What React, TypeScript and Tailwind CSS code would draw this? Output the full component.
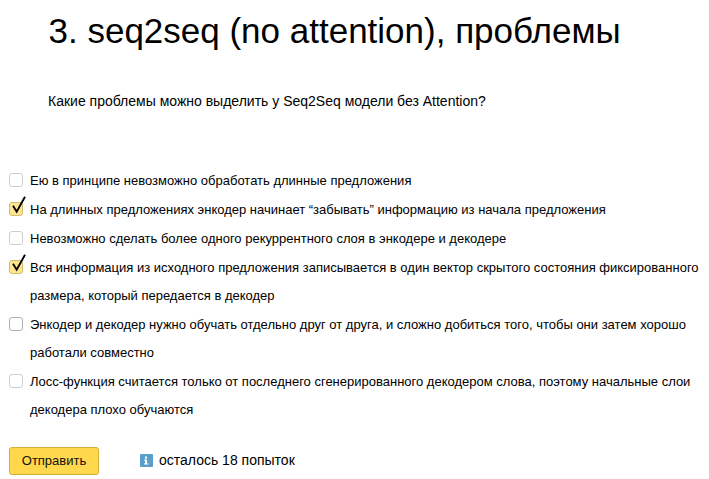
const F = "font-['Liberation_Sans',Arial,sans-serif]";

const Check = ({ checked, dark }: { checked?: boolean; dark?: boolean }) => (
  <span className={`relative mt-[7px] mr-[7px] block h-[14px] w-[14px] shrink-0 rounded-[3px] border ${checked ? "border-[#d2bb6c] bg-[#ffe590]" : dark ? "border-[#b0b0b0] bg-white" : "border-[#cecece] bg-white"}`}>
    {checked && (
      <svg className="absolute left-[1px] top-[-7px]" width="17" height="20" viewBox="0 0 17 20">
        <path d="M2 9.7 L5.7 15.7 L14 0.7" fill="none" stroke="#000" strokeWidth="1.9" />
      </svg>
    )}
  </span>
);

const items: { t: string[]; c?: boolean; d?: boolean }[] = [
  { t: ["Ею в принципе невозможно обработать длинные предложения"] },
  { t: ["На длинных предложениях энкодер начинает “забывать” информацию из начала предложения"], c: true },
  { t: ["Невозможно сделать более одного рекуррентного слоя в энкодере и декодере"] },
  { t: ["Вся информация из исходного предложения записывается в один вектор скрытого состояния фиксированного", "размера, который передается в декодер"], c: true },
  { t: ["Энкодер и декодер нужно обучать отдельно друг от друга, и сложно добиться того, чтобы они затем хорошо", "работали совместно"], d: true },
  { t: ["Лосс-функция считается только от последнего сгенерированного декодером слова, поэтому начальные слои", "декодера плохо обучаются"] },
];

export default function App() {
  return (
    <div className={`${F} h-[479px] w-[709px] overflow-hidden bg-white text-[#000]`}>
      <h1 className="pl-[48.5px] pt-[9px] text-[35px] leading-[44px] font-normal">3. seq2seq (no attention), проблемы</h1>
      <p className="pl-[48px] pt-[38px] text-[14px] leading-[20px]">Какие проблемы можно выделить у Seq2Seq модели без Attention?</p>
      <div className="pl-[9px] pt-[55px] flex flex-col">
        {items.map((it, i) => (
          <div key={i} className="flex items-start text-[13px] leading-[29px]">
            <Check checked={it.c} dark={it.d} />
            <div className="whitespace-nowrap">
              {it.t.map((l, j) => <div key={j} className={j > 0 ? "mt-[-1px]" : ""}>{l}</div>)}
            </div>
          </div>
        ))}
      </div>
      <div className="flex items-center pl-[9px] pt-[23px]">
        <button className="h-[28px] w-[90px] rounded-[3px] border border-[#d4b035] bg-[#ffd84d] text-[13px] text-[#111]">Отправить</button>
        <svg className="ml-[41px] mr-[6px] -mt-[2px]" width="13" height="13" viewBox="0 0 13 13">
          <rect width="13" height="13" rx="1" fill="#5a9fc9" />
          <rect x="5" y="2.5" width="2" height="2" fill="#fff" />
          <path d="M4 5.5 H7 V9.5 H8.5 V10.5 H4 V9.5 H5 V6.5 H4 Z" fill="#fff" />
        </svg>
        <span className="text-[14px] -mt-[2px]">осталось 18 попыток</span>
      </div>
    </div>
  );
}
